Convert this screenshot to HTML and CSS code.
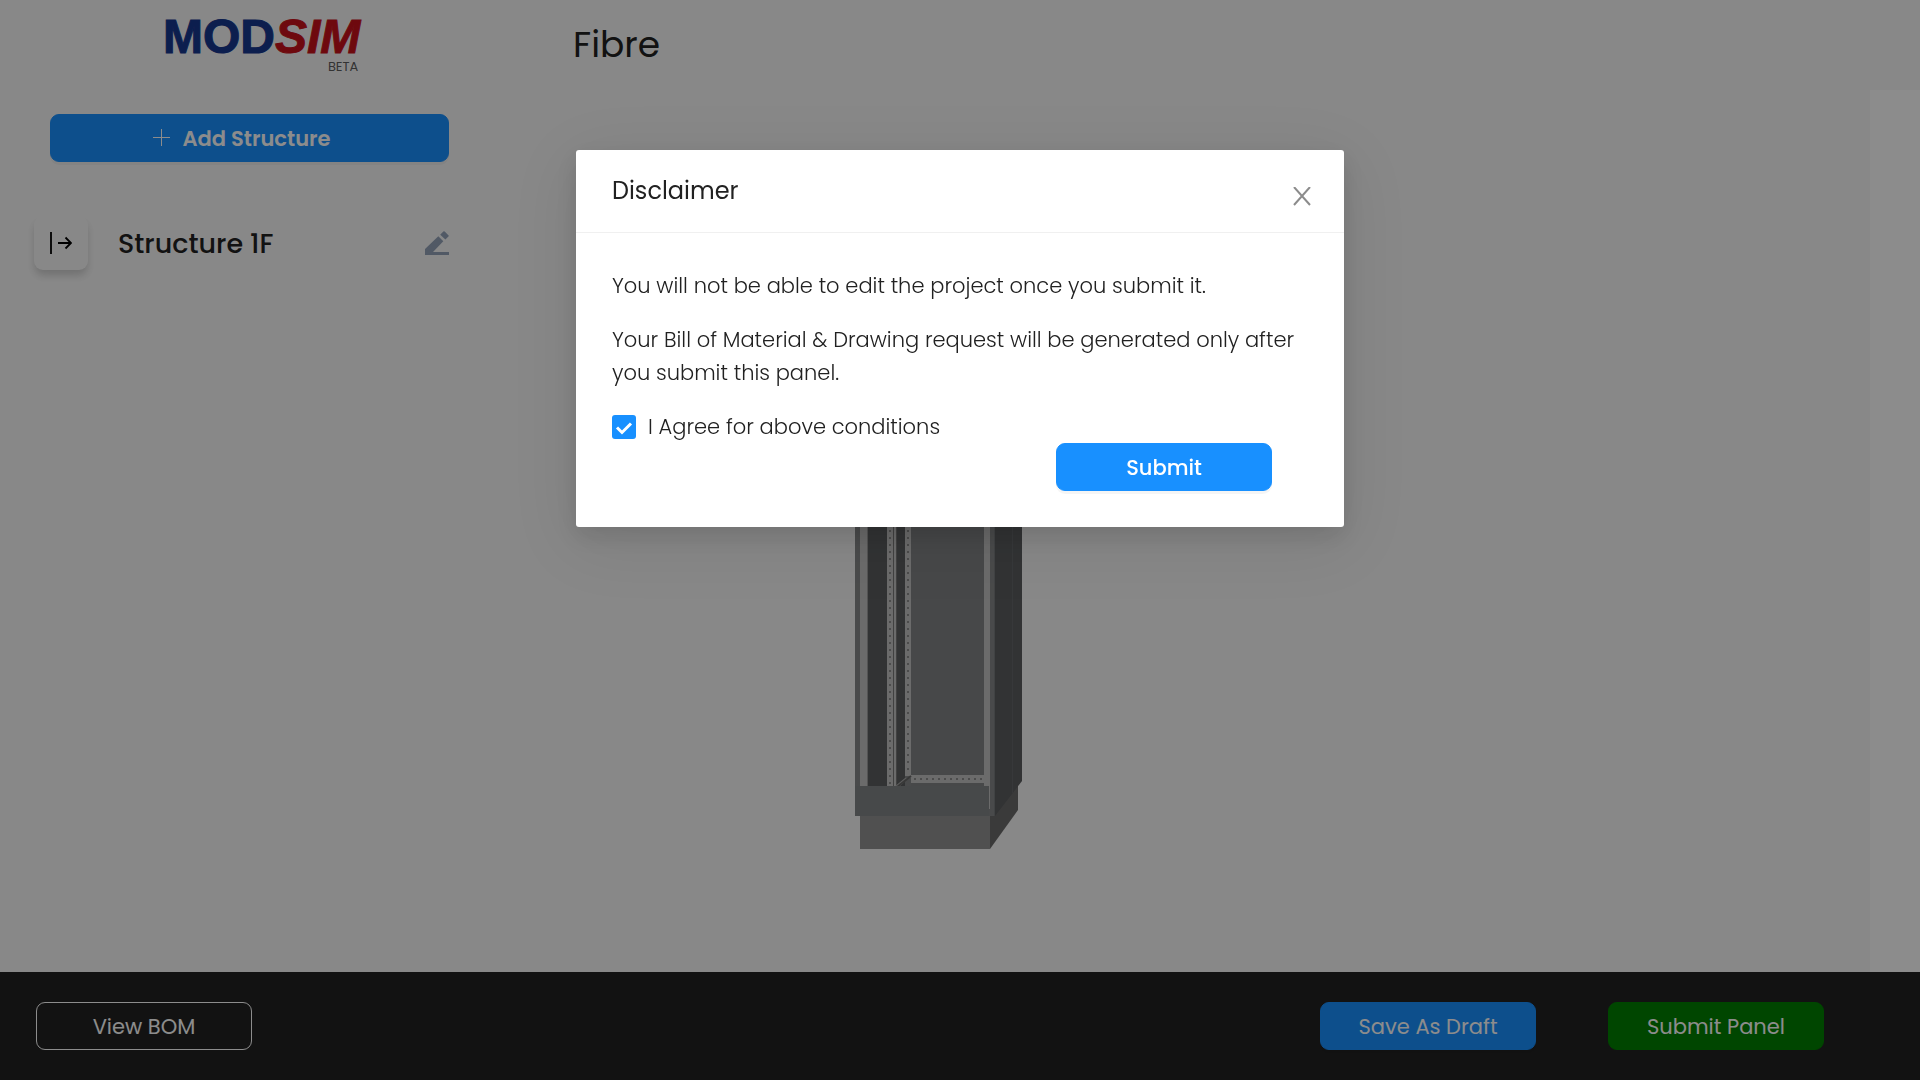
FILE: index.html
```html
<!DOCTYPE html>
<html lang="en">
<head>
<meta charset="utf-8">
<meta name="viewport" content="width=device-width, initial-scale=1">
<title>MODSIM</title>
<link rel="stylesheet" href="styles.css">
</head>
<body>
<div class="app">
  <header class="topbar">
    <div class="brand">
      <div class="logo">
        <div class="logo-name"><span class="logo-mod">MOD</span><span class="logo-sim">SIM</span></div>
        <div class="logo-tag">BETA</div>
      </div>
    </div>
    <h1 class="page-title">Fibre</h1>
  </header>

  <div class="workspace">
    <aside class="sidebar">
      <button class="btn btn-primary btn-add" type="button">
        <svg width="18" height="18" viewBox="0 0 18 18" aria-hidden="true"><path d="M8.5 0v17M0 8.500h17" stroke="currentColor" fill="none"/></svg>
        Add Structure
      </button>
      <div class="structure">
        <button class="expand" type="button" aria-label="Expand structure">
          <svg width="22" height="22" viewBox="0 0 22 22" aria-hidden="true"><path d="M1 0v22M8 11h13M15.500 5.500L21 11l-5.500 5.500" stroke="#000" stroke-width="1.800" fill="none"/></svg>
        </button>
        <h2 class="structure-name">Structure 1F</h2>
        <button class="edit" type="button" aria-label="Edit structure">
          <svg width="24" height="24" viewBox="0 0 24 24" aria-hidden="true"><path d="M0 24v-6L13.300 5.300l5 5L8 21H24v3zM15.200 3.700L18.300.6q.7-.7 1.400 0l3.700 3.600q.7.700 0 1.400l-3 3z" fill="#94a3b8"/></svg>
        </button>
      </div>
    </aside>

    <main class="canvas">
      <svg class="cabinet" width="168" height="610" viewBox="0 0 168 610" role="img" aria-label="Panel preview">
        <defs>
          <pattern id="holes" width="6" height="7" patternUnits="userSpaceOnUse"><rect x="2" y="3" width="2" height="2" fill="#8a8a8a"/></pattern>
        </defs>
        <!-- plinth -->
        <path d="M135 570L163 540V570L135 609z" fill="#6b6b6b"/>
        <rect x="5" y="575" width="130" height="34" fill="#929292"/>
        <!-- frame and side wall -->
        <rect width="140" height="576" fill="#868889"/>
        <path d="M140 0h27v541l-27 35z" fill="#5b5d5f"/>
        <path d="M157.500 0v553" stroke="#64676a" fill="none"/>
        <!-- interior -->
        <rect x="5" width="8" height="547" fill="#c3c3c3"/>
        <rect x="12" width="1" height="547" fill="#999"/>
        <rect x="13" width="19" height="547" fill="#5b5d5f"/>
        <rect x="32" width="10" height="547" fill="#c3c3c3"/>
        <rect x="38" width="1" height="547" fill="#777"/>
        <rect x="41" width="1" height="547" fill="#777"/>
        <rect x="42" width="8" height="547" fill="#5b5d5f"/>
        <rect x="56" width="73" height="547" fill="#818385"/>
        <path d="M39 547l11-9h7v-3l-13 12z" fill="#aaa"/>
        <rect x="50" width="6" height="536" fill="#c3c3c3"/>
        <rect x="56" y="535" width="73" height="8" fill="#c3c3c3"/>
        <path d="M42 547l14-11" stroke="#666" stroke-width="2" fill="none"/>
        <svg x="32" width="6" height="547"><rect width="6" height="547" fill="url(#holes)"/></svg>
        <svg x="50" width="6" height="535"><rect width="6" height="535" fill="url(#holes)"/></svg>
        <svg x="57" y="535" width="72" height="7"><rect width="72" height="7" fill="url(#holes)"/></svg>
        <rect x="129" width="6" height="547" fill="#c3c3c3"/>
        <rect x="134" y="547" width="1" height="22" fill="#c3c3c3"/>
        <rect x="139" width="1" height="576" fill="#777a7c"/>
        <!-- lower front cover -->
        <rect y="546" width="134" height="30" fill="#828587"/>
      </svg>
    </main>
  </div>

  <footer class="actions">
    <button class="btn btn-outline" type="button">View BOM</button>
    <div class="actions-end">
      <button class="btn btn-primary" type="button">Save As Draft</button>
      <button class="btn btn-success" type="button">Submit Panel</button>
    </div>
  </footer>
</div>

<div class="mask">
  <div class="modal" role="dialog" aria-modal="true" aria-labelledby="modal-title">
    <div class="modal-header">
      <h2 class="modal-title" id="modal-title">Disclaimer</h2>
      <button class="close" type="button" aria-label="Close">
        <svg width="18" height="20" viewBox="0 0 18 20" aria-hidden="true"><path d="M1 0l16 18M17 0L1 18" stroke="#8c8c8c" stroke-width="2" fill="none"/></svg>
      </button>
    </div>
    <div class="modal-body">
      <p>You will not be able to edit the project once you submit it.</p>
      <p>Your Bill of Material &amp; Drawing request will be generated only after you submit this panel.</p>
      <label class="agree" for="agree">
        <span class="tick">
          <input id="agree" type="checkbox" checked>
          <svg width="24" height="24" viewBox="0 0 24 24" aria-hidden="true"><path d="M5 12.500l5 5L19 8.500" stroke="#fff" stroke-width="3" fill="none"/></svg>
        </span>
        I Agree for above conditions
      </label>
      <div class="modal-actions">
        <button class="btn btn-primary btn-strong" type="button">Submit</button>
      </div>
    </div>
  </div>
</div>
</body>
</html>
```
FILE: styles.css
```css
* {
  box-sizing: border-box;
}

body {
  margin: 0;
  color: #212121;
  background: #f8f8f8;
  font-family: Poppins, Inter, "Open Sans", sans-serif;
  font-size: 21px;
  line-height: 33px;
}

h1,
h2,
p {
  margin: 0;
}

button {
  font: inherit;
  cursor: pointer;
}

svg {
  display: block;
}

.app {
  display: flex;
  flex-direction: column;
  min-height: 100vh;
}

/* Header */
.topbar {
  display: flex;
  height: 90px;
}

.brand {
  flex: 0 0 573px;
  padding: 13px 0 0 163px;
}

.logo {
  width: fit-content;
}

.logo-name {
  font: bold 48px/48px "Liberation Sans", Arial, sans-serif;
  -webkit-text-stroke: 1px currentColor;
}

.logo-mod {
  color: #16378e;
}

.logo-sim {
  color: #c8121a;
  font-style: italic;
}

.logo-tag {
  padding-right: 2px;
  color: #5e5e5e;
  font-size: 13px;
  line-height: 12px;
  text-align: right;
}

.page-title {
  font-size: 36px;
  font-weight: 400;
  line-height: 90px;
}

/* Workspace */
.workspace {
  display: flex;
  flex: 1;
  background: #fff;
}

.sidebar {
  flex: 0 0 500px;
  padding: 24px 51px 0 50px;
  background: #f8f8f8;
}

.structure {
  display: flex;
  align-items: center;
  gap: 30px;
  margin: 54px 0 0 -16px;
}

.structure-name {
  flex: 1;
  font-size: 27px;
  font-weight: 500;
}

.expand {
  display: grid;
  place-items: center;
  width: 54px;
  height: 54px;
  padding: 0;
  border: 0;
  border-radius: 9px;
  background: #f8f8f8;
  box-shadow: 0 6px 8px -1px rgba(0, 0, 0, 0.18);
}

.edit {
  padding: 0;
  border: 0;
  background: none;
}

.canvas {
  flex: 1;
  margin-right: 50px;
  padding: 150px 0 0 355px;
  background: #f8f8f8;
}

/* Buttons */
.btn {
  display: flex;
  align-items: center;
  justify-content: center;
  width: 216px;
  height: 48px;
  padding: 0;
  border: 1px solid transparent;
  border-radius: 9px;
  color: #fff;
}

.btn-primary {
  border-color: #1890ff;
  background: #1890ff;
  box-shadow: 0 3px 0 rgba(0, 0, 0, 0.04);
}

.btn-success {
  background: #008000;
  border-color: #008000;
}

.btn-outline {
  border-color: #fff;
  background: transparent;
}

.btn-add {
  gap: 12px;
  width: 100%;
  padding-right: 16px;
  font-weight: 600;
}

.btn-strong {
  font-weight: 500;
}

/* Footer */
.actions {
  display: flex;
  align-items: center;
  justify-content: space-between;
  height: 108px;
  padding: 0 96px 0 36px;
  background: #212121;
}

.actions-end {
  display: flex;
  gap: 72px;
}

/* Dialog */
.mask {
  position: fixed;
  inset: 0;
  padding-top: 150px;
  background: rgba(0, 0, 0, 0.45);
}

.modal {
  width: 40%;
  min-width: 600px;
  margin: 0 auto;
  border-radius: 3px;
  background: #fff;
  box-shadow: 0 14px 72px 12px rgba(0, 0, 0, 0.08), 0 9px 24px rgba(0, 0, 0, 0.12);
}

.modal-header {
  display: flex;
  justify-content: space-between;
  padding: 24px 33px 25px 36px;
  border-bottom: 1px solid #f0f0f0;
}

.modal-title {
  font-size: 24px;
  font-weight: 400;
}

.close {
  align-self: flex-end;
  padding: 0;
  border: 0;
  background: none;
}

.modal-body {
  padding: 36px;
  font-weight: 300;
}

.modal-body p {
  margin-bottom: 21px;
}

.agree {
  display: flex;
  align-items: center;
  gap: 12px;
}

.tick {
  display: grid;
}

.tick > * {
  grid-area: 1 / 1;
}

.tick input {
  width: 24px;
  height: 24px;
  margin: 0;
  border-radius: 3px;
  background: #1890ff;
  appearance: none;
}

.tick svg {
  pointer-events: none;
}

.modal-actions {
  display: flex;
  justify-content: flex-end;
  padding-right: 36px;
}
```
